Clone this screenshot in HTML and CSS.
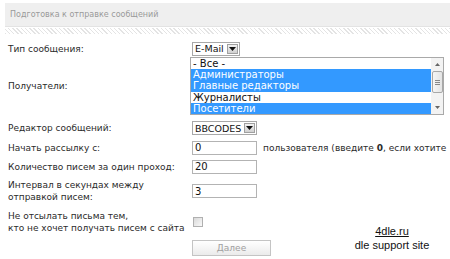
FILE: index.html
```html
<!DOCTYPE html>
<html lang="ru">
<head>
<meta charset="utf-8">
<title>Подготовка к отправке сообщений</title>
<link rel="stylesheet" href="styles.css">
</head>
<body>
<div class="head">Подготовка к отправке сообщений</div>
<div class="hatch"></div>
<div class="form">
  <div class="label">Тип сообщения:</div>
  <div class="field"><span class="sel"><span class="sel-val">E-Mail</span><span class="sel-btn"><svg width="7" height="4" viewBox="0 0 7 4"><path d="M0 0h7L3.5 4z" fill="#111"/></svg></span></span></div>

  <div class="label">Получатели:</div>
  <div class="field">
    <div class="list">
      <div class="opts">
        <div class="opt">- Все -</div>
        <div class="opt on">Администраторы</div>
        <div class="opt on">Главные редакторы</div>
        <div class="opt">Журналисты</div>
        <div class="opt on">Посетители</div>
      </div>
      <div class="sb">
        <div class="sb-arrow"><svg width="5" height="3" viewBox="0 0 5 3"><path d="M0 3h5L2.5 0z" fill="#666"/></svg></div>
        <div class="thumb"><i></i><i></i><i></i></div>
        <div class="sb-space"></div>
        <div class="sb-arrow"><svg width="5" height="3" viewBox="0 0 5 3"><path d="M0 0h5L2.5 3z" fill="#666"/></svg></div>
      </div>
    </div>
  </div>

  <div class="label">Редактор сообщений:</div>
  <div class="field"><span class="sel"><span class="sel-val">BBCODES</span><span class="sel-btn"><svg width="7" height="4" viewBox="0 0 7 4"><path d="M0 0h7L3.5 4z" fill="#111"/></svg></span></span></div>

  <div class="label">Начать рассылку с:</div>
  <div class="field nowrap"><input class="inp" type="text" value="0"><span class="hint">пользователя (введите <b>0</b>, если хотите</span></div>

  <div class="label">Количество писем за один проход:</div>
  <div class="field"><input class="inp" type="text" value="20"></div>

  <div class="label">Интервал в секундах между<br>отправкой писем:</div>
  <div class="field"><input class="inp" type="text" value="3"></div>

  <div class="label">Не отсылать письма тем,<br>кто не хочет получать писем с сайта</div>
  <div class="field"><span class="chk"></span></div>

  <div class="label"></div>
  <div class="field"><button class="btn" type="button">Далее</button></div>
</div>
<div class="mark"><span class="mark-link">4dle.ru</span><br>dle support site</div>
</body>
</html>
```
FILE: styles.css
```css
* { box-sizing: border-box; }
html, body { margin: 0; padding: 0; background: #fff; overflow: hidden; }
body {
  position: relative;
  width: 450px;
  height: 259px;
  font-family: "DejaVu Sans", Verdana, sans-serif;
  font-size: 9px;
  color: #2a2a2a;
}
.head {
  margin: 3px 0 0 5px;
  height: 24px;
  background: #efefef;
  border-bottom: 1px solid #e3e3e3;
  padding-left: 5px;
  display: flex;
  align-items: center;
  color: #9a9a9a;
  font-size: 8px;
}
.hatch {
  margin: 1px 0 0 5px;
  height: 6px;
  background: repeating-linear-gradient(45deg, #e4e4e4 0 1px, #fff 1px 3px);
}
.form {
  margin-top: 7px;
  padding-left: 8px;
  display: grid;
  grid-template-columns: 184px 1fr;
  grid-template-rows: 15px 60px 24px 15px 23px 26px 35px 17px;
  align-items: center;
}
.label { line-height: 12px; white-space: nowrap; }
.field { display: flex; align-items: center; }
.nowrap { white-space: nowrap; }
.sel {
  display: inline-flex;
  align-items: center;
  height: 14px;
  border: 1px solid #a8a8a8;
  background: #fff;
  padding: 0 1px 0 2px;
  gap: 3px;
  font-size: 9.5px;
  color: #111;
}
.sel-btn {
  width: 11px;
  height: 10px;
  border: 1px solid #a0a0a0;
  background: linear-gradient(#f2f2f2, #d0d0d0);
  display: flex;
  align-items: center;
  justify-content: center;
}
.list {
  display: flex;
  width: 254px;
  height: 58px;
  margin-left: -2px;
  border: 1px solid #a9a9a9;
  background: #fff;
}
.opts { flex: 1; }
.opt {
  height: 11.2px;
  line-height: 11px;
  padding-left: 2px;
  font-size: 10px;
  color: #111;
}
.opt.on { background: #3399ff; color: #fff; }
.sb {
  width: 12px;
  background: #f3f3f3;
  display: flex;
  flex-direction: column;
  align-items: center;
}
.sb-arrow { height: 13px; display: flex; align-items: center; justify-content: center; }
.thumb {
  width: 11px;
  height: 22px;
  border: 1px solid #a8a8a8;
  border-radius: 2px;
  background: linear-gradient(90deg, #f6f6f6, #e4e4e4);
  display: flex;
  flex-direction: column;
  align-items: center;
  justify-content: center;
  gap: 1px;
}
.thumb i { display: block; width: 5px; height: 1px; background: #888; }
.sb-space { flex: 1; }
.inp {
  width: 65px;
  height: 14px;
  border: 1px solid #b3b3b3;
  padding: 0 2px;
  margin: 0;
  font-family: "DejaVu Sans", Verdana, sans-serif;
  font-size: 10px;
  color: #111;
  background: #fff;
  outline: none;
}
.hint { margin-left: 6px; }
.hint b { font-weight: bold; }
.chk {
  display: block;
  width: 10px;
  height: 10px;
  margin-left: 1px;
  border: 1px solid #b0b0b0;
  background: linear-gradient(135deg, #d9d9d9, #f9f9f9);
}
.btn {
  width: 79px;
  height: 16px;
  margin: 0;
  padding: 0;
  border: 1px solid #c4c4c4;
  background: linear-gradient(#ffffff, #ebebeb);
  color: #a0a0a0;
  font-family: "DejaVu Sans", Verdana, sans-serif;
  font-size: 9px;
}
.mark {
  position: absolute;
  left: 342px;
  top: 224px;
  width: 100px;
  text-align: center;
  font-family: "Liberation Sans", Arial, sans-serif;
  font-size: 11px;
  line-height: 14px;
  color: #111;
}
.mark-link { text-decoration: underline; }
```
